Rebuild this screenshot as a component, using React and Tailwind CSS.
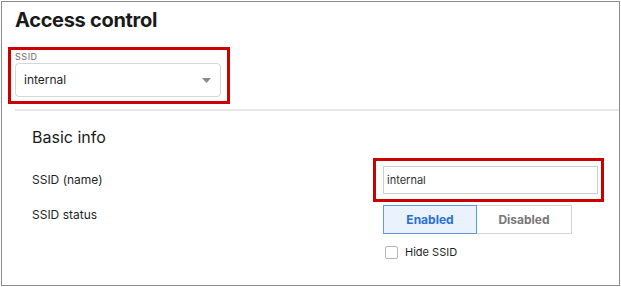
import React from "react";

export default function App() {
  return (
    <div className="w-[621px] h-[287px] bg-white pl-[1px] pt-[1px]" style={{ fontFamily: "Inter, 'Liberation Sans', sans-serif" }}>
      <div className="w-[619px] h-[285px] border border-[#8c8c8c] flex flex-col">
        <h1 className="mt-[6px] pl-[13px] text-[20px] leading-[24px] font-bold tracking-[-0.3px] text-[#1a1a1a]">Access control</h1>

        <div className="relative ml-[13px] mt-[19px] w-[206px]">
          <div className="text-[9px] leading-[12px] tracking-[0.06em] text-[#6b6b6b]">SSID</div>
          <div className="h-[34px] rounded-[4px] border border-[#d6d6d6] bg-white flex items-center justify-between pl-[8px] pr-[9px]">
            <span className="text-[12px] text-[#1f1f1f]">internal</span>
            <svg width="9" height="5" viewBox="0 0 9 5" className="mt-[1px]">
              <path d="M0 0 L9 0 L4.5 5 Z" fill="#8a8a8a" />
            </svg>
          </div>
          <div className="absolute -left-[7px] -top-[4px] -right-[9px] -bottom-[7px] border-[3px] border-[#cc0000] pointer-events-none" />
        </div>

        <div className="ml-[13px] mt-[12px] h-[2px] bg-[#e8e8e8]" />

        <div className="pl-[30px]">
          <h2 className="mt-[16px] text-[16px] leading-[20px] text-[#1a1a1a]">Basic info</h2>

          <div className="mt-[19px] flex items-center">
            <div className="w-[351px] text-[12px] leading-[16px] text-[#1f1f1f]">SSID (name)</div>
            <div className="relative w-[215px]">
              <div className="h-[28px] border border-[#cfcfcf] bg-white flex items-center pl-[3px]">
                <span className="text-[11px] text-[#333]">internal</span>
              </div>
              <div className="absolute -left-[10px] -top-[8px] -right-[6px] -bottom-[8px] border-[3px] border-[#cc0000] pointer-events-none" />
            </div>
          </div>

          <div className="mt-[11px] flex items-start">
            <div className="w-[351px] pt-[2px] text-[12px] leading-[16px] text-[#1f1f1f]">SSID status</div>
            <div className="flex flex-col">
              <div className="flex h-[29px]">
                <div className="w-[94px] h-full border border-[#5c9ae6] bg-[#e9f2fd] flex items-center justify-center text-[12px] font-bold text-[#2a6fd4]">Enabled</div>
                <div className="w-[95px] h-full border border-l-0 border-[#d3d3d3] bg-white flex items-center justify-center text-[12px] font-bold text-[#777777]">Disabled</div>
              </div>
              <div className="mt-[11px] flex items-center pl-[2px]">
                <div className="w-[13px] h-[13px] rounded-[2px] border border-[#b5b5b5] bg-white" />
                <span className="ml-[7px] text-[11px] leading-[14px] text-[#1f1f1f]">Hide SSID</span>
              </div>
            </div>
          </div>
        </div>
      </div>
    </div>
  );
}
